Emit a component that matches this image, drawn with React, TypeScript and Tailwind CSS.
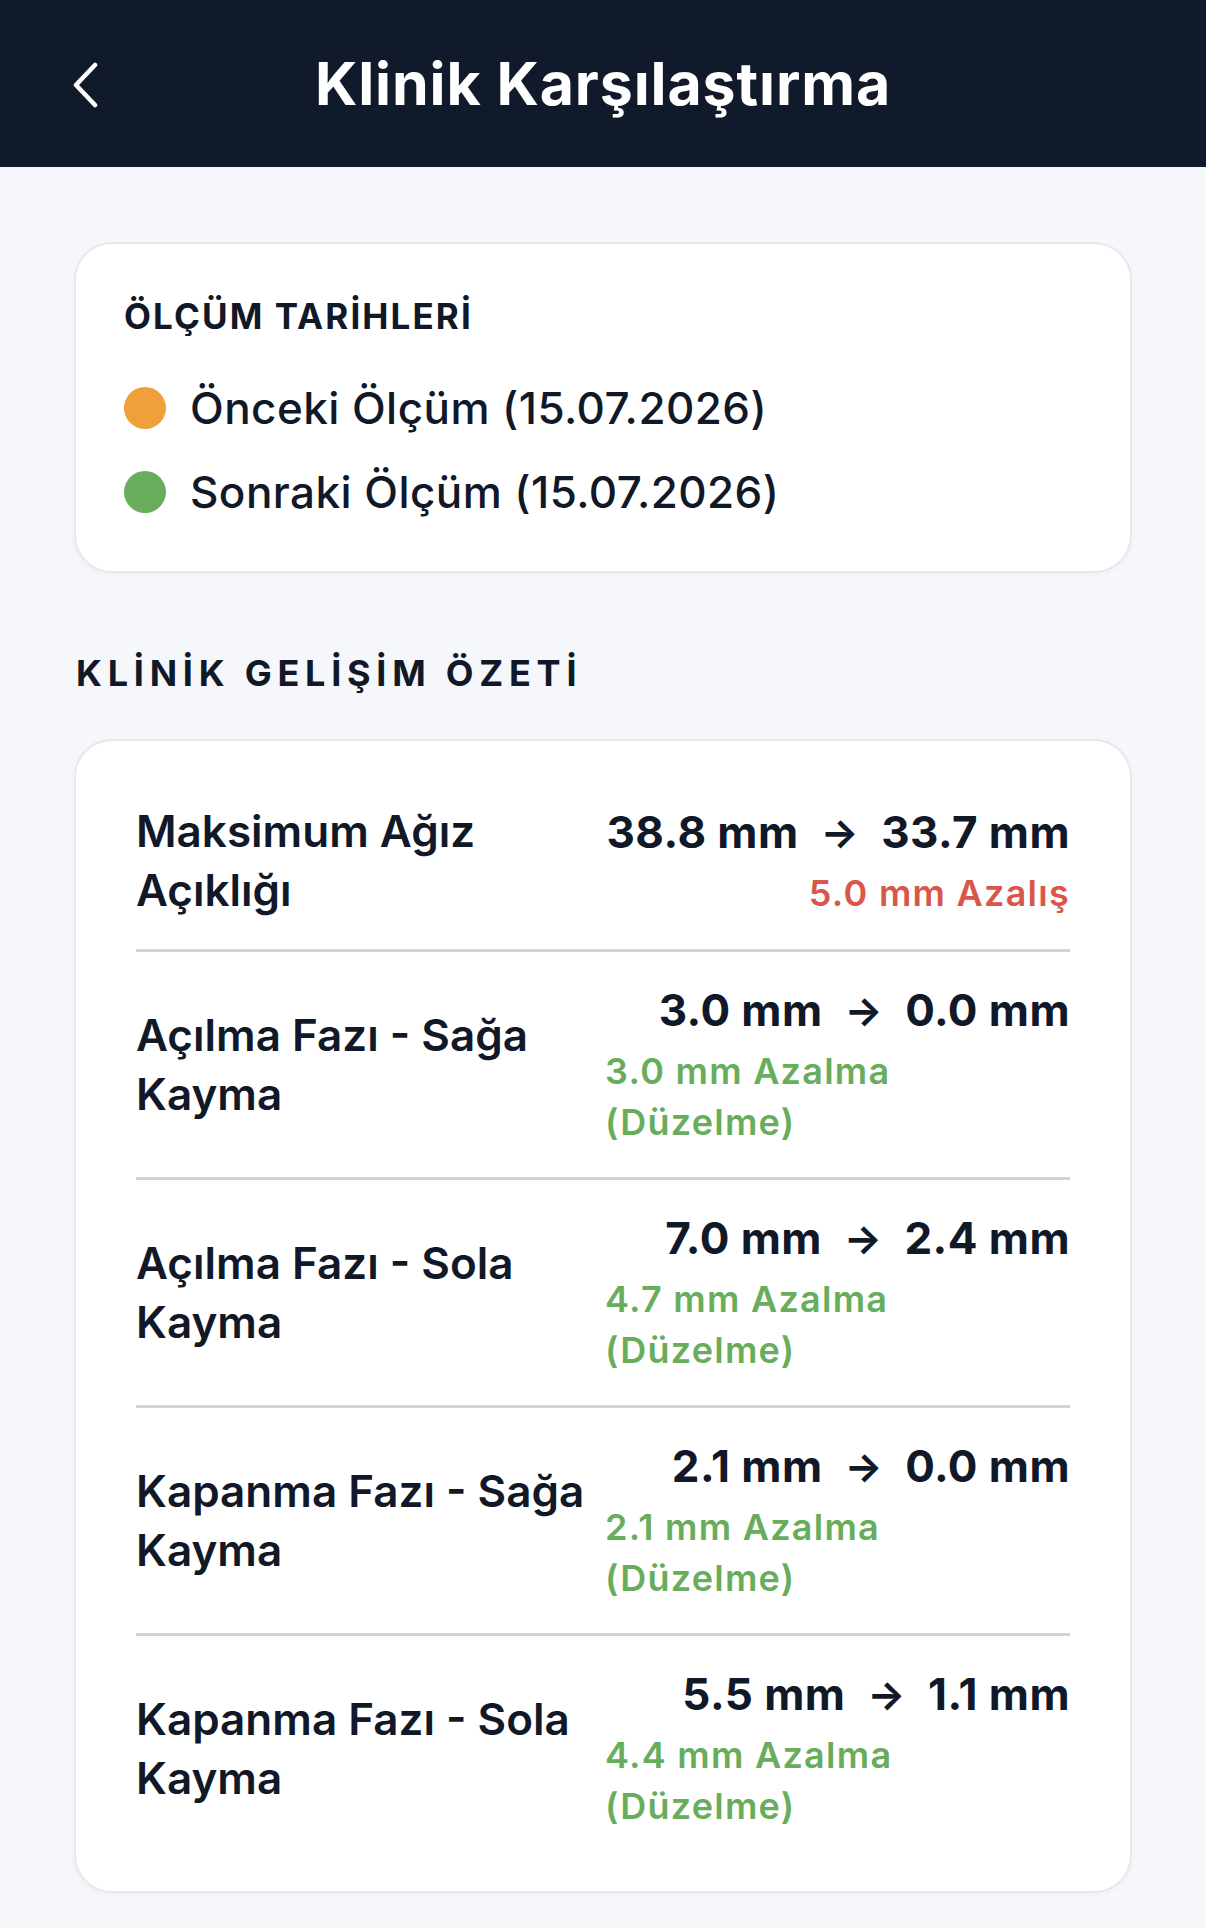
import React from "react";

const rows = [
  {
    label: "Maksimum Ağız Açıklığı",
    before: "38.8 mm",
    after: "33.7 mm",
    note: "5.0 mm Azalış",
    tone: "red",
  },
  {
    label: "Açılma Fazı - Sağa Kayma",
    before: "3.0 mm",
    after: "0.0 mm",
    note: "3.0 mm Azalma (Düzelme)",
    tone: "green",
  },
  {
    label: "Açılma Fazı - Sola Kayma",
    before: "7.0 mm",
    after: "2.4 mm",
    note: "4.7 mm Azalma (Düzelme)",
    tone: "green",
  },
  {
    label: "Kapanma Fazı - Sağa Kayma",
    before: "2.1 mm",
    after: "0.0 mm",
    note: "2.1 mm Azalma (Düzelme)",
    tone: "green",
  },
  {
    label: "Kapanma Fazı - Sola Kayma",
    before: "5.5 mm",
    after: "1.1 mm",
    note: "4.4 mm Azalma (Düzelme)",
    tone: "green",
  },
];

export default function App() {
  return (
    <div
      lang="tr"
      className="min-h-screen bg-[#f5f7fa] text-[#111827] pb-[35px]"
      style={{ fontFamily: "Inter, 'Noto Sans', sans-serif" }}
    >
      {/* Header */}
      <header className="relative flex h-[167px] items-center justify-center bg-[#111a2b]">
        <button className="absolute left-[68px] top-[58px] flex h-[52px] w-[36px] items-center justify-center">
          <svg width="30" height="48" viewBox="0 0 30 48" fill="none">
            <polyline
              points="24,5 5,25 24,45"
              stroke="white"
              strokeWidth="4.5"
              strokeLinecap="round"
              strokeLinejoin="round"
            />
          </svg>
        </button>
        <h1 className="text-[59px] font-bold leading-none tracking-[0.015em] text-white">
          Klinik Karşılaştırma
        </h1>
      </header>

      {/* Dates card */}
      <div className="mx-[74px] mt-[75px] rounded-[38px] border-2 border-[#e6e8ec] bg-white px-[48px] pt-[50px] pb-[52px] shadow-[0_2px_6px_rgba(0,0,0,0.03)]">
        <div className="text-[35px] font-bold leading-[44px] tracking-[0.06em]">
          ÖLÇÜM TARİHLERİ
        </div>
        <div className="mt-[43px] flex flex-col gap-[30px]">
          <div className="flex h-[54px] items-center gap-[24px]">
            <span className="h-[42px] w-[42px] rounded-full bg-[#f0a03b]" />
            <span className="text-[44px] font-medium tracking-[0.01em]">
              Önceki Ölçüm (15.07.2026)
            </span>
          </div>
          <div className="flex h-[54px] items-center gap-[24px]">
            <span className="h-[42px] w-[42px] rounded-full bg-[#67ad5c]" />
            <span className="text-[44px] font-medium tracking-[0.01em]">
              Sonraki Ölçüm (15.07.2026)
            </span>
          </div>
        </div>
      </div>

      {/* Section title */}
      <div className="mx-[76px] mt-[78px] text-[36px] font-bold leading-[44px] tracking-[0.16em]">
        KLİNİK GELİŞİM ÖZETİ
      </div>

      {/* Summary card */}
      <div className="mx-[74px] mt-[44px] rounded-[38px] border-2 border-[#e6e8ec] bg-white px-[60px] pt-[32px] pb-[30px] shadow-[0_2px_6px_rgba(0,0,0,0.03)]">
        {rows.map((row, i) => (
          <div
            key={row.label}
            className={`flex items-center gap-[12px] py-[29px] ${
              i < rows.length - 1 ? "border-b-[3px] border-[#d3d3da]" : ""
            }`}
          >
            <div className="flex-1 text-[44px] font-semibold leading-[59px]">
              {row.label}
            </div>
            <div className="flex w-[465px] flex-col items-end">
              <div className="flex items-center text-[44px] font-bold leading-[59px] tracking-[0.01em]">
                <span>{row.before}</span>
                <span className="mx-[22px] text-[40px]">→</span>
                <span>{row.after}</span>
              </div>
              <div
                className={`mt-[6px] text-[36px] font-semibold leading-[51px] tracking-[0.035em] ${
                  row.tone === "red" ? "text-[#d9574a]" : "text-[#67ad5c]"
                }`}
              >
                {row.note}
              </div>
            </div>
          </div>
        ))}
      </div>
    </div>
  );
}
